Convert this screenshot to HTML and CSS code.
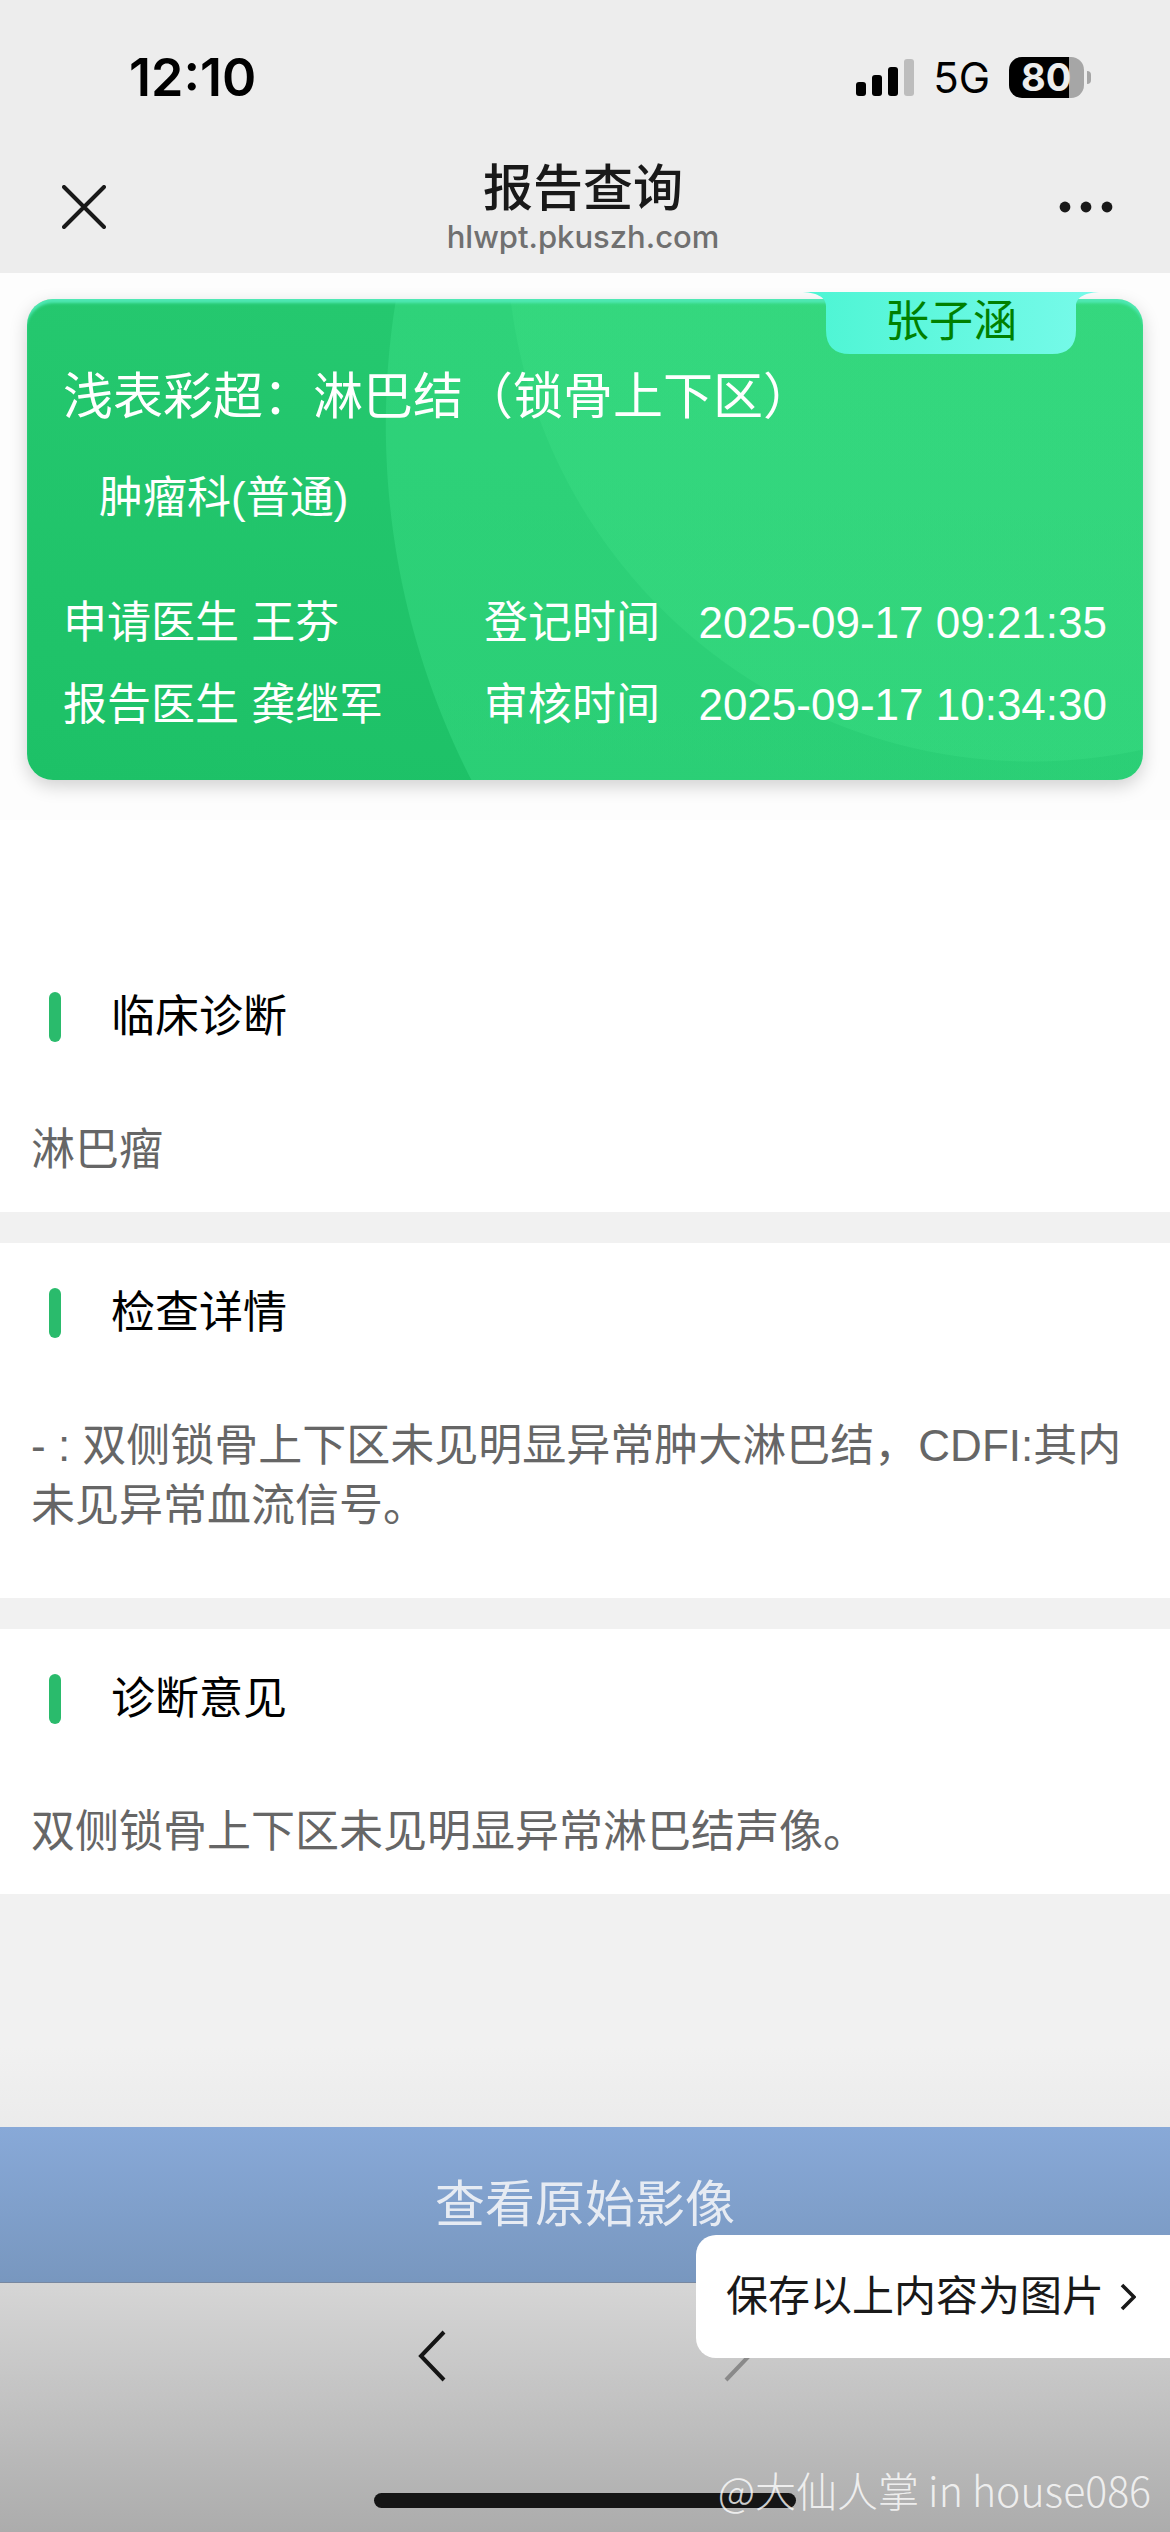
FILE: index.html
```html
<!DOCTYPE html>
<html lang="zh-CN">
<head>
<meta charset="utf-8">
<meta name="viewport" content="width=device-width, initial-scale=1">
<title>报告查询</title>
<link rel="stylesheet" href="styles.css">
</head>
<body>
<header class="top">
  <div class="status">
    <time class="clock">12:10</time>
    <div class="indicators">
      <svg class="signal" viewBox="0 0 58 37" width="58" height="37" aria-hidden="true">
        <rect x="0" y="23" width="10" height="14" rx="3"/>
        <rect x="16" y="16" width="10" height="21" rx="3"/>
        <rect x="32" y="8" width="10" height="29" rx="3"/>
        <rect x="48" y="0" width="10" height="37" rx="3" fill="#bdbdbd"/>
      </svg>
      <span class="network">5G</span>
      <span class="battery"><span class="level">80</span></span>
    </div>
  </div>
  <nav class="nav">
    <button class="icon-button" type="button" aria-label="关闭">
      <svg viewBox="0 0 44 44" width="44" height="44"><path d="M2 2 42 42M42 2 2 42" fill="none" stroke="#191919" stroke-width="4" stroke-linecap="round"/></svg>
    </button>
    <div class="heading">
      <h1 class="title">报告查询</h1>
      <p class="domain">hlwpt.pkuszh.com</p>
    </div>
    <button class="icon-button menu" type="button" aria-label="更多">
      <svg viewBox="0 0 54 12" width="54" height="12"><g fill="#191919"><circle cx="6" cy="6" r="5.4"/><circle cx="27" cy="6" r="5.4"/><circle cx="48" cy="6" r="5.4"/></g></svg>
    </button>
  </nav>
</header>

<main class="content">
  <div class="summary">
    <section class="card">
      <div class="patient">
        <svg class="patient-shape" viewBox="0 0 302 62" preserveAspectRatio="none" aria-hidden="true">
          <defs><linearGradient id="tab"><stop offset="0" stop-color="#4cf5d3"/><stop offset="1" stop-color="#78faea"/></linearGradient></defs>
          <path d="M0 0H302C286 0 276 5 276 14V38Q276 62 252 62H50Q26 62 26 38V14C26 5 16 0 0 0Z" fill="url(#tab)"/>
        </svg>
        <span class="patient-name">张子涵</span>
      </div>
      <h2 class="exam">浅表彩超：淋巴结（锁骨上下区）</h2>
      <p class="department">肿瘤科(普通)</p>
      <div class="facts">
        <span>申请医生 王芬</span><span>登记时间</span><time class="date">2025-09-17 09:21:35</time>
        <span>报告医生 龚继军</span><span>审核时间</span><time class="date">2025-09-17 10:34:30</time>
      </div>
    </section>
  </div>

  <section class="block block-first">
    <h2 class="block-title">临床诊断</h2>
    <p class="block-text">淋巴瘤</p>
  </section>
  <section class="block block-tall">
    <h2 class="block-title">检查详情</h2>
    <p class="block-text">- : 双侧锁骨上下区未见明显异常肿大淋巴结，CDFI:其内未见异常血流信号。</p>
  </section>
  <section class="block">
    <h2 class="block-title">诊断意见</h2>
    <p class="block-text">双侧锁骨上下区未见明显异常淋巴结声像。</p>
  </section>
</main>

<footer class="bottom">
  <button class="view" type="button">查看原始影像</button>
  <div class="toolbar">
    <div class="history">
      <button class="icon-button" type="button" aria-label="后退">
        <svg viewBox="0 0 30 54" width="30" height="54"><path d="M27 3 4 27 27 51" fill="none" stroke="#151515" stroke-width="4"/></svg>
      </button>
      <button class="icon-button" type="button" aria-label="前进">
        <svg viewBox="0 0 30 54" width="30" height="54"><path d="M3 3 26 27 3 51" fill="none" stroke="#8a8a8a" stroke-width="4"/></svg>
      </button>
    </div>
    <div class="home"></div>
  </div>
  <button class="save" type="button">
    <span>保存以上内容为图片</span>
    <svg viewBox="0 0 16 28" width="16" height="28" aria-hidden="true"><path d="M2 2 14 14 2 26" fill="none" stroke="#191919" stroke-width="3.6"/></svg>
  </button>
  <p class="watermark">@大仙人掌 in house086</p>
</footer>
</body>
</html>
```
FILE: styles.css
```css
* {
  box-sizing: border-box;
}

body {
  margin: 0;
  min-height: 100vh;
  display: flex;
  flex-direction: column;
  background: #f1f1f1;
  color: #000;
  font-family: "Liberation Sans", "Noto Sans CJK SC", sans-serif;
  font-size: 44px;
  line-height: 60px;
}

h1, h2, p {
  margin: 0;
  font-weight: 400;
}

button {
  margin: 0;
  padding: 0;
  border: 0;
  background: none;
  font: inherit;
  color: inherit;
}

svg {
  display: block;
}

/* Status bar and navigation */
.top {
  background: #ededed;
}

.status {
  height: 159px;
  padding: 0 79px 4px 129px;
  display: flex;
  align-items: center;
  justify-content: space-between;
  font-family: Inter, sans-serif;
}

.clock {
  font-size: 52px;
  font-weight: 600;
}

.indicators {
  display: flex;
  align-items: center;
}

.network {
  margin: 0 19px;
  font-size: 42px;
}

.battery {
  position: relative;
  width: 75px;
  height: 41px;
  margin-right: 7px;
  border-radius: 13px;
  background: linear-gradient(90deg, #000 80%, #a6a6a6 80%);
}

.battery::after {
  content: "";
  position: absolute;
  left: 78px;
  top: 14px;
  width: 4px;
  height: 13px;
  border-radius: 0 4px 4px 0;
  background: #a6a6a6;
}

.level {
  display: block;
  padding-left: 12px;
  color: #ededed;
  font-size: 38px;
  font-weight: 700;
  line-height: 41px;
}

.nav {
  padding: 0 57px 18px 62px;
  display: grid;
  grid-template-columns: 54px 1fr 63px;
  align-items: center;
}

.menu {
  justify-self: end;
}

.heading {
  text-align: center;
}

.title {
  font-size: 50px;
  font-weight: 500;
  line-height: 60px;
  color: #191919;
}

.domain {
  font-family: Inter, sans-serif;
  font-size: 31px;
  font-weight: 500;
  line-height: 36px;
  color: #707070;
}

/* Report summary */
.content {
  background: #f1f1f1;
}

.summary {
  padding: 26px 27px 40px;
  background: #fdfdfd;
}

.card {
  position: relative;
  padding: 68px 36px 45px;
  border-radius: 26px;
  color: #fff;
  background:
    radial-gradient(circle 525px at 90% -62px, rgba(64, 226, 136, 0.3) 524px, transparent 525px),
    radial-gradient(circle 780px at 102% 126px, rgba(62, 226, 138, 0.4) 779px, transparent 780px),
    linear-gradient(185deg, #26c970, #1dc167);
  box-shadow: inset 0 5px 3px -1px #4fe8b4, 0 6px 18px rgba(0, 0, 0, 0.18);
}

.patient {
  position: absolute;
  top: -7px;
  right: 41px;
  width: 302px;
  height: 62px;
  text-align: center;
}

.patient-shape {
  position: absolute;
  width: 100%;
  height: 100%;
}

.patient-name {
  position: relative;
  color: #008000;
}

.exam {
  font-size: 50px;
  line-height: 60px;
}

.department {
  padding: 41px 36px 65px;
}

.facts {
  display: grid;
  grid-template-columns: 421px 1fr auto;
  row-gap: 22px;
  white-space: nowrap;
}

.date {
  text-align: right;
}

/* Report sections */
.block {
  padding: 45px 31px 32px;
  background: #fff;
}

.block + .block {
  margin-top: 31px;
}

.block-first {
  padding-top: 172px;
}

.block-tall {
  padding-bottom: 62px;
}

.block-title {
  display: flex;
  align-items: center;
  gap: 50px;
  height: 50px;
  margin: 0 18px 78px;
  font-size: 44px;
}

.block-title::before {
  content: "";
  width: 12px;
  height: 50px;
  border-radius: 6px;
  background: #2abb6c;
}

.block-text {
  color: #666;
}

/* Bottom actions */
.bottom {
  position: relative;
  margin-top: auto;
  padding-top: 80px;
  background: linear-gradient(#f1f1f1, #ebebeb 80px);
}

.view {
  display: block;
  width: 100%;
  height: 156px;
  border-bottom: 1px solid #7888a0;
  background: linear-gradient(#88a9d8, #7897bf);
  color: #e6ebf3;
  font-size: 50px;
}

.toolbar {
  height: 249px;
  padding: 46px 0 24px;
  display: flex;
  flex-direction: column;
  align-items: center;
  justify-content: space-between;
  background: linear-gradient(#d6d6d6, #acacac);
}

.history {
  display: flex;
  gap: 276px;
}

.home {
  width: 36%;
  height: 15px;
  border-radius: 8px;
  background: #151515;
}

.save {
  position: absolute;
  right: 0;
  bottom: 174px;
  height: 123px;
  padding: 0 34px 0 30px;
  display: flex;
  align-items: center;
  gap: 16px;
  border-radius: 20px 0 0 20px;
  background: #fff;
  color: #191919;
  font-size: 42px;
}

.watermark {
  position: absolute;
  right: 19px;
  bottom: 13px;
  color: rgba(255, 255, 255, 0.8);
  font-family: "Noto Sans CJK SC", sans-serif;
  font-size: 41px;
  font-weight: 300;
}
```
